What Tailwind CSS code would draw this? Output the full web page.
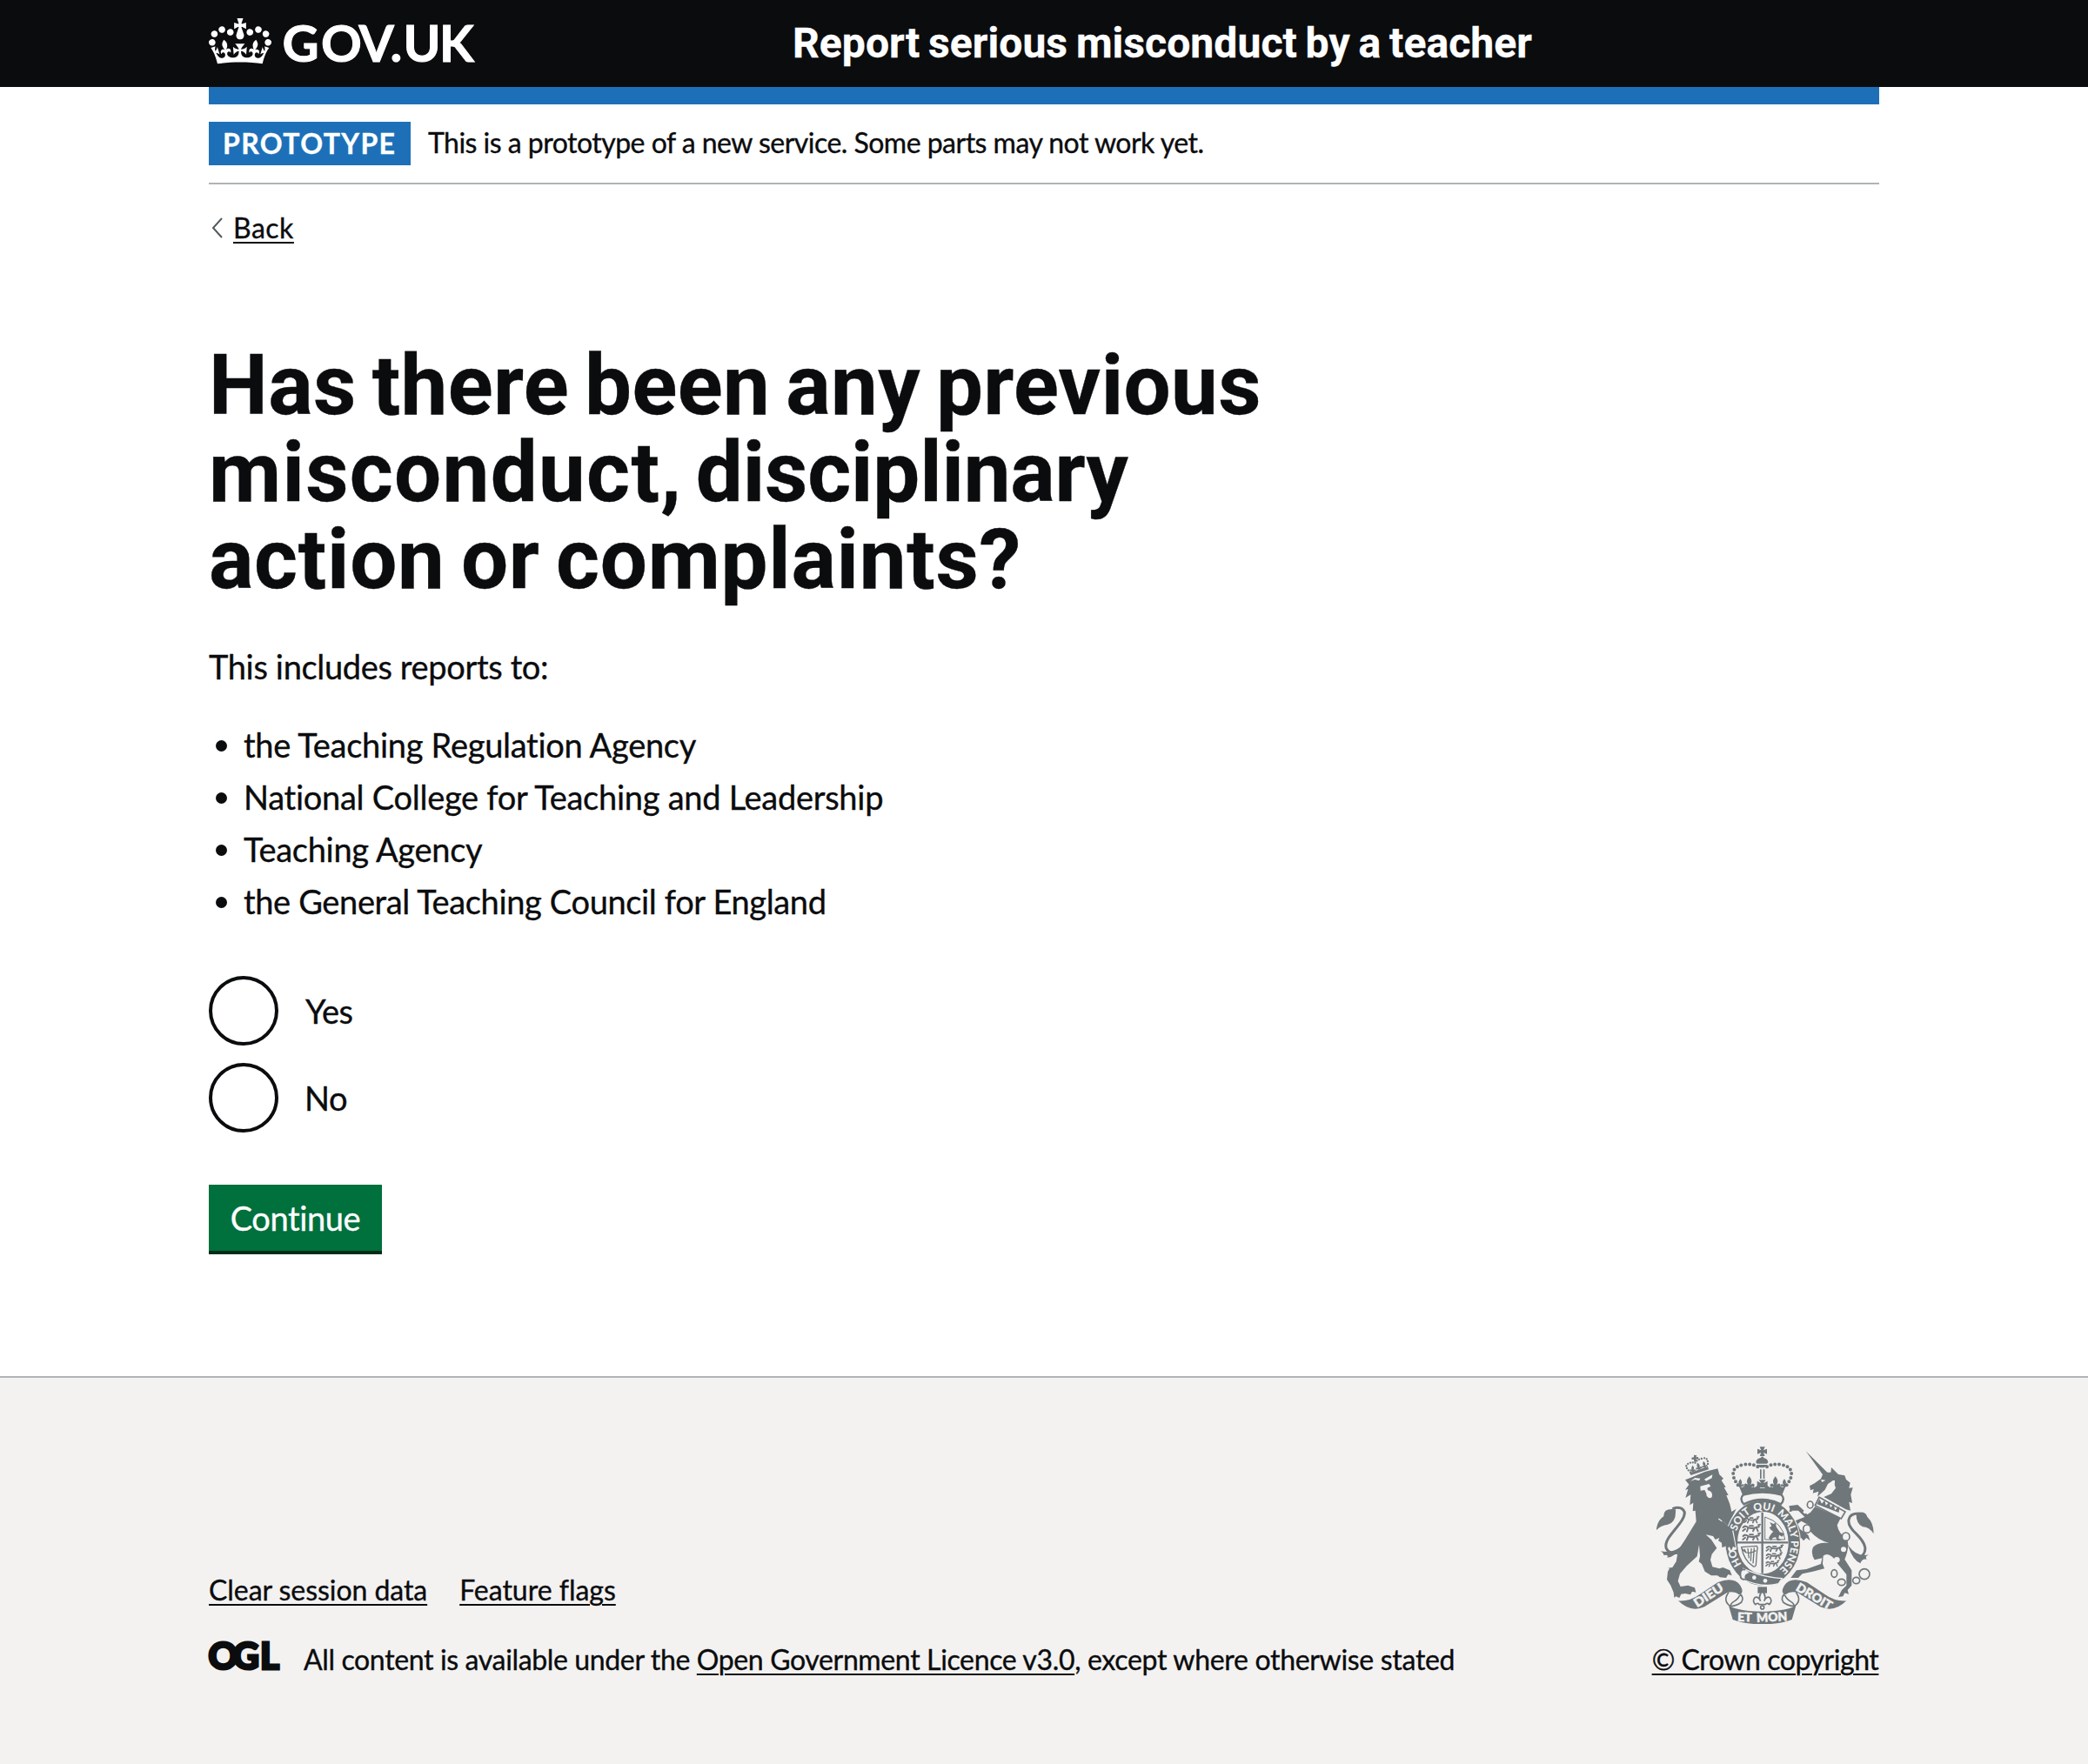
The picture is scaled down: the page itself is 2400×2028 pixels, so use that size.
<!DOCTYPE html>
<html lang="en">
<head>
<meta charset="utf-8">
<title>Report serious misconduct by a teacher</title>
<script src="https://cdn.jsdelivr.net/npm/@tailwindcss/browser@4"></script>
</head>
<body class="min-h-[2028px] w-[2400px] bg-white font-['Lato',sans-serif] text-[#0b0c0e] [-webkit-text-stroke:0.35px_currentColor]">
<header class="bg-[#0b0c0e] text-white">
  <div class="mx-auto flex h-[100px] w-[1920px] items-start">
    <a class="block w-[671px] pt-[21px]" aria-label="GOV.UK">
      <svg class="block overflow-visible" width="310" height="72" viewBox="0 0 310 72" fill="#fff">
        <g transform="scale(.5455)"><path d="M25 30.2c3.5 1.5 7.7-.2 9.1-3.7 1.5-3.6-.2-7.8-3.9-9.2-3.6-1.4-7.6.3-9.1 3.9-1.4 3.5.3 7.5 3.9 9zM9 39.5c3.6 1.5 7.8-.2 9.2-3.7 1.5-3.6-.2-7.8-3.9-9.1-3.6-1.5-7.6.2-9.1 3.8-1.4 3.5.3 7.5 3.8 9zM4.4 57.2c3.5 1.5 7.7-.2 9.1-3.8 1.5-3.6-.2-7.7-3.9-9.1-3.5-1.5-7.6.3-9.1 3.8-1.4 3.5.3 7.6 3.9 9.1zm38.3-21.4c3.5 1.5 7.7-.2 9.1-3.8 1.5-3.6-.2-7.7-3.9-9.1-3.6-1.5-7.6.3-9.1 3.8-1.3 3.6.4 7.7 3.9 9.1zm64.4-5.6c-3.6 1.5-7.8-.2-9.1-3.7-1.5-3.6.2-7.8 3.8-9.2 3.6-1.4 7.7.3 9.2 3.9 1.3 3.5-.4 7.5-3.9 9zm15.9 9.3c-3.6 1.5-7.7-.2-9.1-3.7-1.5-3.6.2-7.8 3.7-9.1 3.6-1.5 7.7.2 9.2 3.8 1.5 3.5-.3 7.5-3.8 9zm4.7 17.7c-3.6 1.5-7.8-.2-9.2-3.8-1.5-3.6.2-7.7 3.9-9.1 3.6-1.5 7.7.3 9.2 3.8 1.3 3.5-.4 7.6-3.9 9.1zM89.3 35.8c-3.6 1.5-7.8-.2-9.2-3.8-1.4-3.6.2-7.7 3.9-9.1 3.6-1.5 7.7.3 9.2 3.8 1.4 3.6-.3 7.7-3.9 9.1zM69.7 17.7l8.9 4.7V9.3l-8.9 2.8c-.2-.3-.5-.6-.9-.9L72.4 0H59.6l3.5 11.2c-.3.3-.6.5-.9.9l-8.8-2.8v13.1l8.8-4.7c.3.3.6.7.9.9l-5 15.4v.1c-.2.8-.4 1.6-.4 2.4 0 4.1 3.1 7.5 7 8.1h.2c.3 0 .7.1 1 .1.4 0 .7 0 1-.1h.2c4-.6 7.1-4.1 7.1-8.1 0-.8-.1-1.7-.4-2.4V34l-5.1-15.4c.4-.2.7-.6 1-.9zM66 92.8c16.9 0 32.8 1.1 47.1 3.2 4-16.9 8.9-26.7 14-33.5l-9.6-3.4c1 4.9 1.1 7.2 0 10.2-1.5-1.4-3-4.3-4.2-8.7L108.6 76c2.8-2 5-3.2 7.5-3.3-4.4 9.4-10 11.9-13.6 11.2-4.3-.8-6.3-4.6-5.6-7.9 1-4.7 5.7-5.9 8-.5 4.3-8.7-3-11.4-7.6-8.8 7.1-7.2 7.9-13.5 2.1-21.1-8 6.1-8.1 12.3-4.5 20.8-4.7-5.4-12.1-2.5-9.5 6.2 3.4-5.2 7.9-2 7.2 3.1-.6 4.3-6.4 7.8-13.5 7.2-10.3-.9-10.9-8-11.2-13.8 2.5-.5 7.1 1.8 11 7.3L80.2 60c-4.1 4.4-8 5.3-12.3 5.4 1.4-4.4 8-11.6 8-11.6H55.5s6.4 7.2 7.9 11.6c-4.2-.1-8-1-12.3-5.4l1.4 16.4c3.9-5.5 8.5-7.7 10.9-7.3-.3 5.8-.9 12.8-11.1 13.8-7.2.6-12.9-2.9-13.5-7.2-.7-5 3.8-8.3 7.1-3.1 2.7-8.7-4.6-11.6-9.4-6.2 3.7-8.5 3.6-14.7-4.6-20.8-5.8 7.6-5 13.9 2.2 21.1-4.7-2.6-11.9.1-7.7 8.8 2.3-5.5 7.1-4.2 8.1.5.7 3.3-1.3 7.1-5.7 7.9-3.5.7-9-1.8-13.5-11.2 2.5.1 4.7 1.3 7.5 3.3l-4.7-15.4c-1.2 4.4-2.7 7.2-4.3 8.7-1.1-3-.9-5.3 0-10.2l-9.5 3.4c5 6.9 9.9 16.7 14 33.5 14.8-2.1 30.8-3.2 47.7-3.2z"/></g>
        <text y="50" x="84.5 129 172.5 208.500 223.500 265" font-size="58" font-weight="700" stroke="#fff" stroke-width="1">GOV.UK</text>
      </svg>
    </a>
    <a class="mt-5 font-['Roboto',sans-serif] text-[48px] leading-[60px] font-bold tracking-[0.08px] [word-spacing:-2.2px] whitespace-nowrap">Report serious misconduct by a teacher</a>
  </div>
</header>

<div class="mx-auto w-[1920px]">
  <div class="h-5 bg-[#1d70b8]"></div>
  <div class="flex items-center gap-5 border-b-2 border-[#b1b4b6] py-5 text-[32px]">
    <strong class="flex h-[50px] w-[232px] items-center pl-[16px] leading-[50px] font-bold tracking-[1.4px] bg-[#1d70b8] text-white">PROTOTYPE</strong>
    <span class="-mt-[2px] leading-[40px] tracking-[-0.52px]">This is a prototype of a new service. Some parts may not work yet.</span>
  </div>
  <a class="mt-[30px] flex h-10 w-fit items-center text-[32px] leading-[40px]">
    <svg class="mr-[11px] ml-[3px]" width="14" height="24" viewBox="0 0 14 24" fill="none" stroke="#505a5f" stroke-width="2"><path d="M12 1 2 12l10 11"/></svg>
    <span class="underline decoration-2 underline-offset-[4px] tracking-[0.5px]">Back</span>
  </a>

  <main class="mt-[111px]">
    <h1 class="font-['Roboto',sans-serif] text-[96px] leading-[100px] font-bold whitespace-nowrap">
      <span class="block tracking-[0.4px] [word-spacing:-6.2px]">Has there been any previous</span>
      <span class="block tracking-[-0.15px] [word-spacing:-8px]"><span class="tracking-[1.3px]">misconduct,</span> disciplinary</span>
      <span class="block tracking-[0.73px] [word-spacing:-6.3px]">action or complaints?</span>
    </h1>
    <p class="mt-12 text-[38px] leading-[50px] tracking-[-0.35px]">This includes reports to:</p>
    <ul class="mt-10 flex list-none flex-col gap-2.5 text-[38px] leading-[50px]">
      <li class="flex items-center gap-[19px] pl-[8px]"><i class="mt-[3px] size-[13px] rounded-full bg-[#0b0c0e]"></i><span class="tracking-[-0.29px]">the Teaching Regulation Agency</span></li>
      <li class="flex items-center gap-[19px] pl-[8px]"><i class="mt-[3px] size-[13px] rounded-full bg-[#0b0c0e]"></i><span class="tracking-[-0.27px]">National College for Teaching and Leadership</span></li>
      <li class="flex items-center gap-[19px] pl-[8px]"><i class="mt-[3px] size-[13px] rounded-full bg-[#0b0c0e]"></i><span class="tracking-[-0.3px]">Teaching Agency</span></li>
      <li class="flex items-center gap-[19px] pl-[8px]"><i class="mt-[3px] size-[13px] rounded-full bg-[#0b0c0e]"></i><span class="tracking-[-0.36px]">the General Teaching Council for England</span></li>
    </ul>
    <div class="mt-[61px] flex flex-col gap-5 text-[38px] leading-[50px]">
      <label class="flex h-20 items-center"><span class="mr-[31px] size-20 rounded-full border-4 border-[#0b0c0e]"></span><span class="tracking-[-0.5px]">Yes</span></label>
      <label class="flex h-20 items-center"><span class="mr-[30px] size-20 rounded-full border-4 border-[#0b0c0e]"></span><span class="tracking-[-0.5px]">No</span></label>
    </div>
    <button class="mt-[60px] block h-20 w-[199px] border-b-4 border-[#002d18] bg-[#00703c] text-center text-[38px] leading-[50px] tracking-[-0.4px] text-white">Continue</button>
  </main>
</div>

<footer class="mt-[140px] h-[446px] border-t-2 border-[#b1b4b6] bg-[#f3f2f1] text-[32px] leading-[40px]">
  <div class="mx-auto flex w-[1920px] justify-between pt-[79px]">
    <div class="pt-[145px]">
      <div class="flex gap-[37px]">
        <a class="underline decoration-2 underline-offset-[4px] tracking-[-0.06px]">Clear session data</a>
        <a class="underline decoration-2 underline-offset-[4px] tracking-[-0.02px]">Feature flags</a>
      </div>
      <div class="mt-10 flex items-start">
        <svg class="-mt-[10px] mr-[27px] overflow-visible" width="82" height="56" viewBox="0 -10 82 56" fill="#0b0c0e" aria-label="OGL"><text y="31" x="-0.500 27.500 59" font-size="42" font-weight="900" stroke="#0b0c0e" stroke-width="3">OGL</text></svg>
        <p class="whitespace-pre"><span class="tracking-[-0.36px]">All content is available under the </span><a class="underline decoration-2 underline-offset-[4px] tracking-[-0.36px]">Open Government Licence v3.0</a><span class="tracking-[-0.31px]">, except where otherwise stated</span></p>
      </div>
    </div>
    <a class="flex w-[262px] flex-col items-center">
      <svg class="block" width="250" height="204" viewBox="73 41 750 612" fill="#6f777b" aria-label="Royal coat of arms">
        <defs>
          <path id="ring" d="M440 486A97 113 0 0 1 440 260A97 113 0 0 1 440 486"/>
          <g id="fleur"><path d="M0-22C12-8 8 0 4 8C14-2 22 6 16 16Q8 10 6 18H-6Q-8 10-16 16C-22 6-14-2-4 8C-8 0-12-8 0-22Z"/></g>
          <g id="passant" fill="none" stroke="#6f777b" stroke-width="6" stroke-linecap="round"><path d="M8 10q10-9 18 0 14 6 30-1M14 5l-6 4M16 15l-9 7M26 12l-4 12M50 12l-6 11M56 10l6 13M58 8q12 2 6-7l6-2M32 4h12"/></g>
          <g id="scroll">
            <path d="M148 573Q190 575 222 551L285 509Q340 488 362 520Q377 545 359 552Q340 538 315 546L238 594Q190 615 148 573Z"/>
            <path d="M322 544Q300 572 328 592M362 549C352 582 330 570 328 592M354 545Q378 558 366 578Q352 590 328 592" fill="none" stroke="#6f777b" stroke-width="5"/>
          </g>
        </defs>
        <!-- lion -->
        <path d="M172 156L192 148 240 128 284 117 290 138 304 151 297 158 312 181 306 182 321 209 314 209 326 240 332 266 348 256 334 285 322 318 342 340 346 390 336 388 330 402 324 388 313 400 312 386 298 388 303 376 286 366 290 356 276 362 268 350 243 345 262 362 281 391 264 412 259 432 266 456 290 462 302 458 326 468 333 486 320 482 313 494 292 492 283 486 262 486 240 472 229 446 219 438 223 420 220 380 213 420 178 452 154 480 147 505 156 524 182 520 205 528 209 544 196 541 190 552 172 548 158 550 152 563 140 558 134 562 132 544 122 520 109 500 112 472 118 462 112 460 128 458 141 438 148 398 170 365 210 300 207 262 198 264 200 235 188 243 191 207 173 218 182 188 172 190 185 172Z"/>
        <path d="M190 160l16-5 14 4 4-8-18-2M238 154l20-12 8-4-2 12-20 10" fill="#f3f2f1"/>
        <path d="M224 178l30-8 6 8-12 6 2 8q14 4 15 14 1 14-9 13-12-4-11-16l-6-12-14 2z" fill="#f3f2f1"/>
        <path d="M287 290q40 26 48 60" fill="none" stroke="#f3f2f1" stroke-width="4"/>
        <path d="M148 408C100 412 98 382 116 354C140 320 170 294 170 268Q160 244 128 256" fill="none" stroke="#6f777b" stroke-width="9"/>
        <path d="M139 258Q96 252 98 282Q76 294 72 330Q88 312 112 310Q142 302 139 258ZM166 378Q132 412 88 402Q100 410 98 416 116 412 110 424 138 424 166 378Z"/>
        <path d="M188 132l62-22 3 10-62 20z"/><path d="M190 130Q168 110 180 102Q192 92 206 98Q214 84 234 82Q252 76 250 106" fill="none" stroke="#6f777b" stroke-width="7" stroke-linecap="round" stroke-dasharray="0 9"/>
        <path d="M202 70l10 2-3 6 8-1 1 8-9-1 4 8-10 3-1-10-7 2-1-8 8-1z"/><use href="#fleur" transform="translate(198 118) scale(.55)"/><use href="#fleur" transform="translate(218 110) rotate(-15) scale(.6)"/><use href="#fleur" transform="translate(238 104) rotate(-15) scale(.55)"/>
        <!-- unicorn -->
        <path d="M588 57L646 138 640 152 618 168 601 177 604 192 615 188 612 202 632 196 628 214 654 190 664 170 682 158 691 184 676 204 650 215 726 258 742 262 737 232 748 236 743 207 750 183 737 184 741 166 727 155 722 141 700 137 676 113 674 130 662 130Z"/>
        <path d="M640 155l16 2-12 7z" fill="#f3f2f1"/><path d="M688 158Q690 190 648 212Q676 186 682 158z" fill="#f3f2f1"/>
        <path d="M634 216l90 50-14 24-90-46z" fill="#f3f2f1" stroke="#6f777b" stroke-width="5"/><path d="M626 240l9-18 8 16 10-12 4 18 12-12 4 20 12-13 3 22 16-14-2 22z"/>
        <path d="M620 248L708 288 696 312Q700 340 732 366Q738 392 722 430L746 468 746 520 732 536 736 550 722 546 716 558 700 560 712 536 728 520 728 482 700 448Q670 400 648 418L646 446 652 462 612 472 576 480 562 494 536 494 556 468 590 464 640 446 644 426 618 432Q604 410 613 388Q630 370 668 374Q628 362 604 334L598 312 572 298 560 308 568 326 596 346 603 366 590 356 580 366 560 342 556 318 546 312 548 298 584 284 562 262 534 262 530 246 560 242 586 266 592 276 604 268Z"/>
        <path d="M536 256l-10 12 16-4M574 345l-8 14 20-8"/>
        <g fill="none" stroke="#6f777b" stroke-width="5"><ellipse cx="603" cy="242" rx="10" ry="12"/><ellipse cx="592" cy="325" rx="13" ry="14" fill="#f3f2f1"/><ellipse cx="726" cy="352" rx="13" ry="14" fill="#f3f2f1"/><ellipse cx="686" cy="479" rx="10" ry="13"/><ellipse cx="711" cy="509" rx="13" ry="11"/><ellipse cx="762" cy="503" rx="12" ry="11"/><circle cx="790" cy="481" r="18"/></g>
        <circle cx="718" cy="396" r="9" fill="#f3f2f1"/><circle cx="695" cy="432" r="10" fill="#f3f2f1"/><circle cx="585" cy="267" r="6" fill="#f3f2f1"/>
        <path d="M768 430C808 404 794 374 762 342C722 306 730 272 770 272" fill="none" stroke="#6f777b" stroke-width="9"/>
        <path d="M762 270Q794 262 800 284Q822 304 822 342Q806 318 784 318Q760 306 762 270ZM732 378Q760 424 806 414Q790 420 798 430 782 426 776 444 748 432 732 378Z"/>
        <!-- garter -->
        <ellipse cx="440" cy="373" rx="131" ry="151" fill="#f3f2f1"/>
        <ellipse cx="440" cy="373" rx="108" ry="127" fill="none" stroke="#6f777b" stroke-width="40"/>
        <path d="M298 346L338 330 350 396 324 404Z" fill="#f3f2f1"/>
        <path d="M300 296L334 330L346 390 337 386 331 400 324 386 313 400 312 384 300 388 290 330Z"/>
        <path d="M350 372H527M438 268V478" stroke="#6f777b" stroke-width="7"/>
        <path d="M447 284V362H516Q510 304 447 284Z" fill="none" stroke="#6f777b" stroke-width="3"/>
        <path d="M460 356q10-18 16-22-10-4-14-14l8-4-6-14 12 6 8-4 2 14 12 18 16 6-8 10-10-6-2 12 10 6-14 2-6-12-10 2-6 10z"/>
        <use href="#passant" transform="translate(370 284) scale(.8 .85)"/><use href="#passant" transform="translate(364 311) scale(.95)"/><use href="#passant" transform="translate(364 341) scale(.95)"/>
        <use href="#passant" transform="translate(446 382) scale(.9 .85)"/><use href="#passant" transform="translate(446 408) scale(.85)"/><use href="#passant" transform="translate(446 435) scale(.7 .8)"/>
        <path d="M366 388l52-4q6 6 2 14l-4 52q-4 8-10 4-32-20-40-66zM376 394l6 14M388 392l4 34M400 392l-2 44M410 390l-4 54M366 390q18 30 50 10" fill="none" stroke="#6f777b" stroke-width="4"/>
        <g fill="#f3f2f1" font-size="36" font-weight="900" font-family="Lato">
          <text><textPath href="#ring" startOffset="86">HO</textPath></text>
          <text><textPath href="#ring" startOffset="205">SOIT</textPath></text>
          <text><textPath href="#ring" startOffset="299">QUI</textPath></text>
          <text><textPath href="#ring" startOffset="380">MAL</textPath></text>
          <text><textPath href="#ring" startOffset="456">Y</textPath></text>
          <text><textPath href="#ring" startOffset="487">PENSE</textPath></text>
        </g>
        <path d="M372 462Q440 492 506 496L494 514Q440 530 372 500Z" stroke="#f3f2f1" stroke-width="4"/>
        <path d="M380 466q-18-6-18 16t20 16q-8-14 14-20" fill="#f3f2f1" stroke="#6f777b" stroke-width="6"/><circle cx="410" cy="493" r="7" fill="#f3f2f1"/><circle cx="448" cy="504" r="7" fill="#f3f2f1"/>
        <!-- crown -->
        <path d="M372 208Q438 190 504 208Q518 222 502 240Q438 208 374 240Q358 222 372 208Z" fill="#f3f2f1" stroke="#6f777b" stroke-width="7"/>
        <path d="M352 164L366 182 378 178 380 168 392 182 412 182 426 172 430 184H446L450 172 464 182 484 182 496 168 498 178 510 182 524 164 506 208Q438 192 370 208Z"/>
        <path d="M354 174C328 140 332 110 372 104Q402 98 424 112M522 174C548 140 544 110 504 104Q474 98 452 112" fill="none" stroke="#6f777b" stroke-width="12" stroke-linecap="round" stroke-dasharray="0 14.500"/>
        <path d="M429 42h18l-5 12 12-5v18l-12-5 5 12h-18l5-12-13 5V49l13 5zM434 76h8v10h-8zM416 96a21 17 0 0 1 42 0l-4 4h-34zM418 104h38l-12 10h-14zM430 120h5v32h-5zM441 120h5v32h-5zM426 156h24l-8 12 14-8v22h-36v-22l14 8z"/>
        <use href="#fleur" transform="translate(393 166)"/><use href="#fleur" transform="translate(483 166)"/><use href="#fleur" transform="translate(362 168) scale(.7)"/><use href="#fleur" transform="translate(514 168) scale(.7)"/>
        <!-- scroll and motto -->
        <use href="#scroll"/><use href="#scroll" transform="translate(876 0) scale(-1 1)"/>
        <path d="M322 590Q360 610 438 610Q516 610 554 590L540 638Q500 654 438 654Q376 654 336 638Z"/>
        <g fill="#f3f2f1" stroke="#f3f2f1" stroke-width="1.500" font-family="Lato" font-weight="900" font-size="42">
          <text transform="translate(213 597) rotate(-33)" textLength="112" lengthAdjust="spacingAndGlyphs">DIEU</text>
          <text transform="translate(551 535) rotate(31)" textLength="136" lengthAdjust="spacingAndGlyphs">DROIT</text>
          <text transform="translate(352 643) rotate(2)" textLength="50" lengthAdjust="spacingAndGlyphs">ET</text>
          <text transform="translate(419 647) rotate(-3)" textLength="106" lengthAdjust="spacingAndGlyphs">MON</text>
        </g>
        <path d="M422 525h32v22h-32z"/><path d="M438 540q16 18 6 34 8-18 20-12 10 12-2 24-8-8-14 0h-20q-6-8-14 0-12-12-2-24 12-6 20 12-10-16 6-34z" fill="#f3f2f1" stroke="#6f777b" stroke-width="5"/><circle cx="438" cy="596" r="6" fill="#f3f2f1" stroke="#6f777b" stroke-width="5"/>
      </svg>
      <span class="mt-[21px] underline decoration-2 underline-offset-[4px] tracking-[-0.45px] whitespace-nowrap">© Crown copyright</span>
    </a>
  </div>
</footer>
</body>
</html>
